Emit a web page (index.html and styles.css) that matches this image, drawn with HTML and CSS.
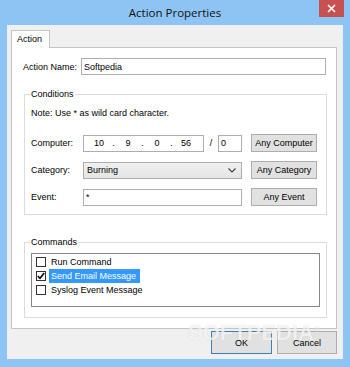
FILE: index.html
```html
<!DOCTYPE html>
<html lang="en">
<head>
    <meta charset="UTF-8">
    <title>Action Properties</title>
    <link rel="stylesheet" href="styles.css">
</head>
<body>
    <div class="window">
        <div class="titlebar">
            <span></span>
            <div class="title">Action Properties</div>
            <button class="close" aria-label="Close">
                <svg width="9" height="9" viewBox="0 0 9 9"><path d="M1 1 L8 8 M8 1 L1 8" stroke="#fff" stroke-width="1.6"/></svg>
            </button>
        </div>

        <div class="client">
            <div class="tabs">
                <div class="tab">Action</div>
            </div>

            <div class="panel">
                <div class="name-row">
                    <label>Action Name:</label>
                    <input class="textbox name-input" type="text" value="Softpedia">
                </div>

                <fieldset class="group conditions">
                    <legend>Conditions</legend>
                    <p class="note">Note: Use * as wild card character.</p>

                    <div class="rows">
                        <div class="field-row">
                            <label>Computer:</label>
                            <div class="ip">
                                <span class="octet">10</span><span class="dot">.</span>
                                <span class="octet">9</span><span class="dot">.</span>
                                <span class="octet">0</span><span class="dot">.</span>
                                <span class="octet">56</span>
                            </div>
                            <span class="slash">/</span>
                            <input class="textbox mask" type="text" value="0">
                            <button class="btn side-btn">Any Computer</button>
                        </div>

                        <div class="field-row">
                            <label>Category:</label>
                            <div class="combo">
                                <span>Burning</span>
                                <svg width="8" height="5" viewBox="0 0 8 5"><path d="M0.5 0.5 L4 4 L7.5 0.5" fill="none" stroke="#444" stroke-width="1.2"/></svg>
                            </div>
                            <button class="btn side-btn">Any Category</button>
                        </div>

                        <div class="field-row">
                            <label>Event:</label>
                            <input class="textbox event-input" type="text" value="*">
                            <button class="btn side-btn">Any Event</button>
                        </div>
                    </div>
                </fieldset>

                <fieldset class="group commands">
                    <legend>Commands</legend>
                    <div class="listbox">
                        <div class="item">
                            <span class="check"></span>
                            <span class="item-text">Run Command</span>
                        </div>
                        <div class="item">
                            <span class="check">
                                <svg width="8" height="8" viewBox="0 0 8 8"><path d="M0.8 4 L3 6.3 L7.2 1" fill="none" stroke="#000" stroke-width="1.5"/></svg>
                            </span>
                            <span class="item-text selected">Send Email Message</span>
                        </div>
                        <div class="item">
                            <span class="check"></span>
                            <span class="item-text">Syslog Event Message</span>
                        </div>
                    </div>
                </fieldset>
            </div>

            <div class="actions">
                <button class="btn default ok">OK</button>
                <button class="btn cancel">Cancel</button>
            </div>
        </div>

        <div class="watermark">SOFTPEDIA<sup>®</sup></div>
    </div>
</body>
</html>
```

FILE: styles.css
```css
body {
    margin: 0;
    font-family: "Liberation Sans", Arial, sans-serif;
    font-size: 9px;
    color: #000;
}

.window {
    position: relative;
    width: 350px;
    height: 367px;
    box-sizing: border-box;
    padding: 0 7px 8px;
    background-color: #8dc4f4;
    display: flex;
    flex-direction: column;
    overflow: hidden;
}

/* title bar */
.titlebar {
    height: 25px;
    margin: 0 -7px;
    display: grid;
    grid-template-columns: 1fr auto 1fr;
    align-items: start;
}

.title {
    font-family: "Open Sans", "Noto Sans", sans-serif;
    font-size: 11.5px;
    line-height: 25px;
    color: #111;
}

.close {
    justify-self: end;
    margin-right: 6px;
    width: 25px;
    height: 17px;
    padding: 0;
    border: none;
    background-color: #c75050;
    display: flex;
    align-items: center;
    justify-content: center;
}

/* client area */
.client {
    flex: 1;
    background-color: #f0f0f0;
    padding: 5px 6px 4px 4px;
    display: flex;
    flex-direction: column;
}

.tabs {
    display: flex;
}

.tab {
    position: relative;
    z-index: 1;
    width: 39px;
    height: 18px;
    box-sizing: border-box;
    margin-bottom: -1px;
    padding-left: 5px;
    border: 1px solid #c4c4c4;
    border-bottom: none;
    background-color: #fff;
    line-height: 16px;
}

.panel {
    background-color: #fff;
    border: 1px solid #c4c4c4;
    padding: 10px 9px 10px 12px;
}

label {
    flex: none;
}

.textbox {
    box-sizing: border-box;
    height: 17px;
    margin: 0;
    padding: 0 2px;
    border: 1px solid #abadb3;
    font: inherit;
    color: #000;
    background-color: #fff;
}

.name-row {
    display: flex;
    align-items: center;
    margin: 0 1px 13px -1px;
}

.name-row label {
    width: 58px;
}

.name-input {
    flex: 1;
    min-width: 0;
}

/* group boxes */
.group {
    margin: 0;
    min-width: 0;
    border: 1px solid #dcdcdc;
}

.group legend {
    margin-left: -1px;
    padding: 0 1px;
    line-height: 12px;
}

.conditions {
    padding: 7px 6px 8px;
    margin-bottom: 21px;
}

.note {
    margin: 0 0 15px;
    line-height: 12px;
}

.rows {
    display: flex;
    flex-direction: column;
    gap: 9px;
}

.field-row {
    display: flex;
    align-items: center;
    height: 18px;
}

.field-row label {
    width: 52px;
}

.ip {
    box-sizing: border-box;
    width: 121px;
    height: 17px;
    padding-left: 3px;
    border: 1px solid #abadb3;
    display: flex;
    align-items: center;
}

.octet {
    width: 24px;
    text-align: center;
}

.dot {
    width: 5px;
    text-align: center;
}

.slash {
    width: 14px;
    text-align: center;
}

.mask {
    width: 24px;
}

.combo,
.event-input {
    width: 159px;
}

.combo {
    box-sizing: border-box;
    height: 17px;
    padding: 0 5px 0 3px;
    border: 1px solid #acacac;
    background: linear-gradient(#f0f0f0, #e5e5e5);
    display: flex;
    align-items: center;
    justify-content: space-between;
}

.btn {
    box-sizing: border-box;
    padding: 0;
    border: 1px solid #adadad;
    background-color: #e1e1e1;
    font: inherit;
    color: #000;
}

.side-btn {
    width: 66px;
    height: 18px;
    margin-left: 9px;
}

/* commands list */
.commands {
    padding: 5px 6px 10px;
}

.listbox {
    height: 54px;
    box-sizing: border-box;
    padding-top: 1px;
    border: 1px solid #828790;
}

.item {
    height: 14px;
    display: flex;
    align-items: center;
}

.check {
    flex: none;
    box-sizing: border-box;
    width: 10px;
    height: 10px;
    margin: 0 3px 0 4px;
    border: 1px solid #333;
    background-color: #fff;
    display: flex;
    align-items: center;
    justify-content: center;
}

.item-text {
    padding: 0 2px;
    line-height: 14px;
    white-space: nowrap;
}

.item-text.selected {
    padding-right: 4px;
    background-color: #3399ff;
    color: #fff;
}

/* dialog buttons */
.actions {
    margin-top: 2px;
    display: flex;
    justify-content: flex-end;
    gap: 5px;
}

.ok,
.cancel {
    height: 23px;
}

.ok {
    width: 61px;
}

.cancel {
    width: 60px;
}

.btn.default {
    border-color: #3c7fb1;
}

.watermark {
    position: absolute;
    left: 188px;
    top: 322px;
    font-size: 22px;
    line-height: 16px;
    font-weight: bold;
    color: rgba(255, 255, 255, 0.75);
    text-shadow: 0 0 1px rgba(0, 0, 0, 0.15);
    pointer-events: none;
}

.watermark sup {
    font-size: 8px;
}
```
